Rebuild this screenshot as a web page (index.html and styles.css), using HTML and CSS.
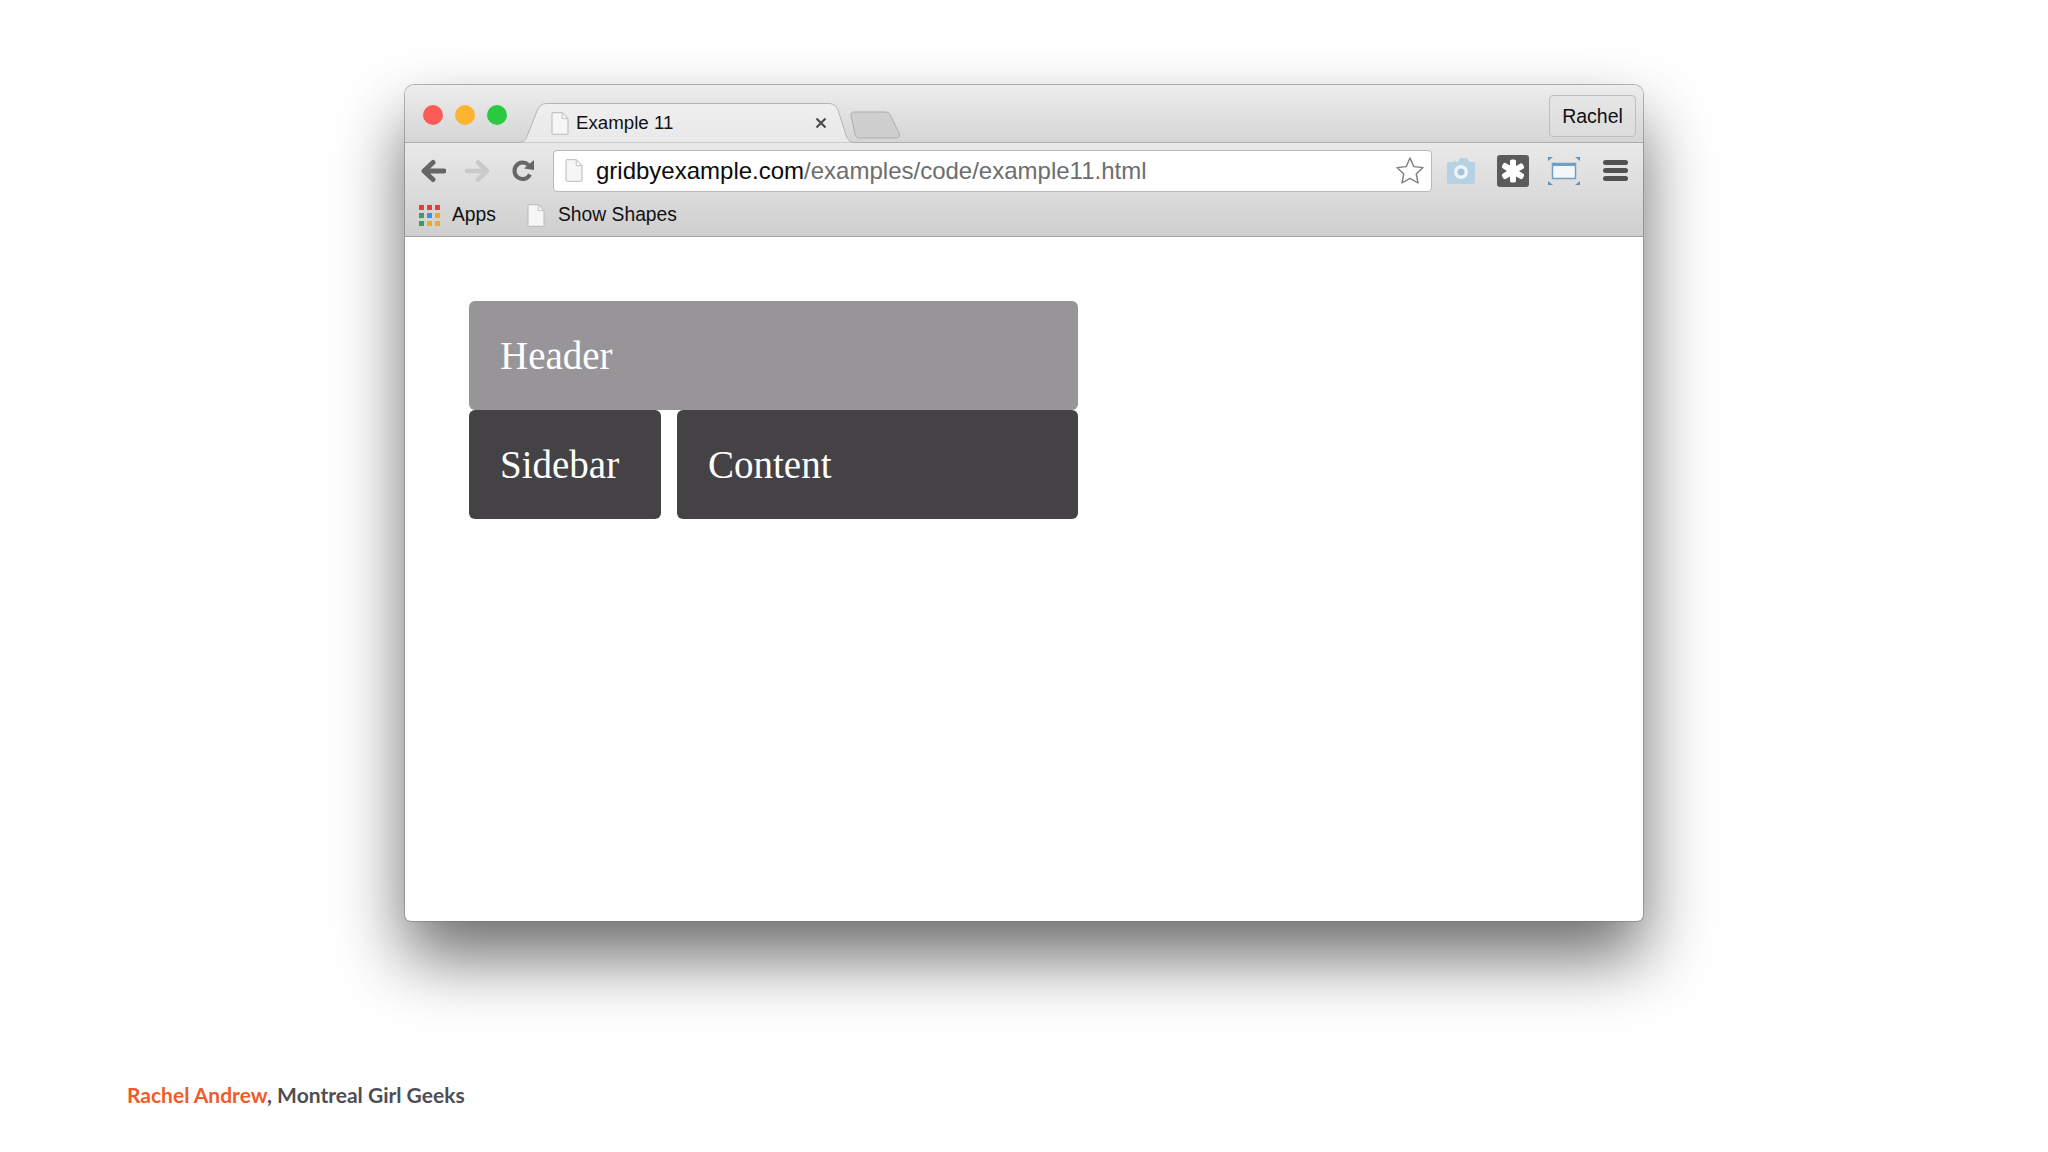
FILE: index.html
```html
<!DOCTYPE html>
<html lang="en">
<head>
<meta charset="utf-8">
<title>Example 11</title>
<link rel="stylesheet" href="styles.css">
</head>
<body>
<svg class="defs" width="0" height="0" aria-hidden="true">
  <symbol id="doc" viewBox="0 0 18 23">
    <path d="M1 1.500C1 1 1.400.7 2 .7h9.500L17 6.500v15c0 .5-.4.8-1 .8H2c-.6 0-1-.3-1-.8z" fill="#f6f6f6" stroke="#b9b9b9" stroke-width="1"/>
    <path d="M11.200 1v5.600H17" fill="none" stroke="#c4c4c4" stroke-width="1"/>
  </symbol>
</svg>
<main class="slide">
  <section class="window">
    <div class="tabstrip">
      <div class="lights">
        <span class="light red"></span>
        <span class="light yellow"></span>
        <span class="light green"></span>
      </div>
      <div class="tab">
        <svg class="tab-shape" viewBox="0 0 338 40" preserveAspectRatio="none">
          <path d="M0 39.500c6 0 8-1 10-6L20 8c2-5 5-7.500 10-7.500h281c5 0 8 2 10 6.500l8 25c2 6 5 7.500 9 7.500" fill="url(#tabfill)" stroke="#b4b4b4"/>
          <defs><linearGradient id="tabfill" x1="0" y1="0" x2="0" y2="1"><stop offset="0" stop-color="#efeff0"/><stop offset="1" stop-color="#e9e9ea"/></linearGradient></defs>
        </svg>
        <svg class="doc tab-doc"><use href="#doc"/></svg>
        <span class="tab-title">Example 11</span>
        <svg class="tab-close" viewBox="0 0 12 12"><path d="M1.500 1.500l9 9M10.500 1.500l-9 9" stroke="#4c4c4c" stroke-width="2.200"/></svg>
      </div>
      <svg class="newtab" viewBox="0 0 52 28"><path d="M2 5c-.6-2.500.8-4 3-4h31c3 0 4.500 1 5.500 3.500L50 22c1 3 0 5-3 5H11c-3 0-4-1-4.800-3.500z" fill="#cfcfd0" stroke="#adadad"/></svg>
      <div class="profile">Rachel</div>
    </div>
    <div class="toolbar">
      <div class="navrow">
        <svg class="nav back" viewBox="0 0 26 24"><path d="M24 12H6M13 3.500L4 12l9 8.500" fill="none" stroke="#666667" stroke-width="5" stroke-linejoin="round" stroke-linecap="round"/></svg>
        <svg class="nav forward" viewBox="0 0 26 24"><path d="M2 12h18M13 3.500l9 8.500-9 8.500" fill="none" stroke="#c9c9ca" stroke-width="4.500" stroke-linejoin="round" stroke-linecap="round"/></svg>
        <svg class="nav reload" viewBox="0 0 24 24"><path d="M19 15.500A8.200 8.200 0 1 1 17.500 6" fill="none" stroke="#666667" stroke-width="4"/><path d="M13 9.500L23 1v10z" fill="#666667"/></svg>
        <div class="omnibox">
          <svg class="doc omni-doc"><use href="#doc"/></svg>
          <span class="url"><span class="host">gridbyexample.com</span>/examples/code/example11.html</span>
          <svg class="star" viewBox="0 0 30 30"><path d="M15 2l3.800 8.600 9.200 1-6.800 6.300 1.900 9.100L15 22.400 6.900 27l1.900-9.100L2 11.600l9.200-1z" fill="#fff" stroke="#7d7d7d" stroke-width="1.400" stroke-linejoin="round"/></svg>
        </div>
        <svg class="tool camera" viewBox="0 0 30 28"><path d="M3 5h5l1-2 1 2h2l2-4h7l2 4h4c1.500 0 2 1 2 2v17c0 2-1 3-2 3H3c-1.500 0-2-1-2-3V7c0-1 .5-2 2-2z" fill="#b6d0e4"/><circle cx="15" cy="15" r="7" fill="#eef3f7"/><circle cx="15" cy="15" r="3.500" fill="#a4c4dc"/></svg>
        <svg class="tool puzzle" viewBox="0 0 32 32"><rect width="32" height="32" rx="3" fill="#5b5b5c"/><path d="M13 6c0-1 1-1.500 3-1.500s3 .5 3 1.500v5l4.500-2.500c1-.5 2 0 3 2s.7 2.700-.2 3.300L22 16l4.300 2.700c.9.600 1.200 1.300.2 3.300s-2 2.500-3 2L19 21.500V26c0 1-1 1.500-3 1.500s-3-.5-3-1.500v-4.500L8.500 24c-1 .5-2 0-3-2s-.7-2.700.2-3.300L10 16l-4.300-2.700c-.9-.6-1.200-1.300-.2-3.300s2-2.500 3-2l4.500 2.500z" fill="#fff"/></svg>
        <svg class="tool screen" viewBox="0 0 32 28"><rect x="4.500" y="6.500" width="23" height="15" fill="#f4f6f8" stroke="#6ea0c4" stroke-width="1.500"/><rect x="4" y="6" width="24" height="3" fill="#6ea0c4"/><path d="M0 0h5L0 4zM32 0h-5l5 4zM0 28h5l-5-4zM32 28h-5l5-4z" fill="#5f94ba"/></svg>
        <div class="menu"><span></span><span></span><span></span></div>
      </div>
      <div class="bookmarks">
        <div class="apps">
          <i class="c-red"></i><i class="c-red"></i><i class="c-red"></i>
          <i class="c-green"></i><i class="c-blue"></i><i class="c-amber"></i>
          <i class="c-green"></i><i class="c-amber"></i><i class="c-amber"></i>
        </div>
        <span class="mark-apps">Apps</span>
        <svg class="doc mark-doc"><use href="#doc"/></svg>
        <span>Show Shapes</span>
      </div>
    </div>
    <div class="viewport">
      <div class="grid">
        <div class="box header">Header</div>
        <div class="box sidebar">Sidebar</div>
        <div class="box content">Content</div>
      </div>
    </div>
  </section>
  <footer class="credit"><span class="name">Rachel Andrew</span>, Montreal Girl Geeks</footer>
</main>
</body>
</html>
```
FILE: styles.css
```css
* { box-sizing: border-box; }
html, body { margin: 0; height: 100%; background: #fff; overflow: hidden; }
.defs { display: block; height: 0; }
.slide { width: 2048px; height: 1152px; padding-top: 85px; }

.window {
  width: 1238px;
  height: 836px;
  margin: 0 0 0 405px;
  border-radius: 9px 9px 6px 6px;
  background: #fefefe;
  box-shadow: 0 0 0 1px rgba(120,120,120,.55), 0 36px 68px rgba(0,0,0,.58);
  font-family: "Liberation Sans", Arial, sans-serif;
  color: #111;
  display: flex;
  flex-direction: column;
}

.tabstrip {
  height: 58px;
  display: flex;
  align-items: flex-start;
  border-radius: 9px 9px 0 0;
  background: linear-gradient(#ededed, #d5d5d5);
  border-bottom: 1px solid #aeaeae;
  position: relative;
}
.lights { display: flex; gap: 12px; padding: 20px 0 0 18px; }
.light { width: 20px; height: 20px; border-radius: 50%; }
.red { background: #fc5b57; }
.yellow { background: #fdb52f; }
.green { background: #2ac940; }

.tab {
  width: 338px;
  height: 40px;
  margin: 18px 0 0 10px;
  position: relative;
  display: flex;
  align-items: center;
  font-size: 18.700px;
}
.tab-shape { position: absolute; inset: 0; width: 100%; height: 100%; }
.doc { width: 18px; height: 23px; flex: none; }
.tab-doc, .tab-title, .tab-close { position: relative; }
.tab-doc { margin-left: 34px; }
.tab-title { margin-left: 7px; flex: 1; }
.tab-close { width: 12px; height: 12px; margin-right: 28px; }
.newtab { width: 52px; height: 28px; margin: 26px 0 0 -6px; position: relative; }

.profile {
  margin: 10px 7px 0 auto;
  width: 87px;
  height: 42px;
  border: 1px solid #bdbdbd;
  border-radius: 4px;
  background: linear-gradient(#e6e6e6, #dcdcdc);
  font-size: 19.500px;
  display: flex;
  align-items: center;
  justify-content: center;
}

.toolbar {
  height: 94px;
  background: linear-gradient(#e9e9ea, #cfcfd0);
  border-bottom: 1px solid #a3a3a3;
}
.navrow { height: 55px; display: flex; align-items: center; }
.nav { flex: none; }
.back { width: 26px; height: 24px; margin-left: 15px; }
.forward { width: 26px; height: 24px; margin-left: 19px; }
.reload { width: 24px; height: 24px; margin-left: 20px; }
.omnibox {
  width: 879px;
  height: 42px;
  margin-left: 18px;
  display: flex;
  align-items: center;
  background: #fff;
  border: 1px solid #b8b8b8;
  border-radius: 4px;
}
.omni-doc { margin-left: 11px; }
.url { margin-left: 13px; flex: 1; font-size: 24px; color: #6d6d6e; white-space: nowrap; }
.host { color: #0c0c0c; }
.star { width: 30px; height: 30px; margin-right: 6px; }
.tool { flex: none; }
.camera { width: 30px; height: 28px; margin-left: 14px; }
.puzzle { width: 32px; height: 32px; margin-left: 21px; }
.screen { width: 32px; height: 28px; margin-left: 19px; }
.menu { width: 25px; margin-left: 23px; display: flex; flex-direction: column; gap: 3px; }
.menu span { height: 5px; border-radius: 3px; background: #515152; }

.bookmarks {
  height: 38px;
  display: flex;
  align-items: center;
  padding: 0 0 4px 14px;
  font-size: 19.300px;
}
.apps { width: 22px; display: grid; grid-template-columns: repeat(3, 5px); gap: 3px; }
.apps i { height: 5px; display: block; }
.c-red { background: #e2403f; }
.c-green { background: #3d9c5c; }
.c-blue { background: #3e8ee8; }
.c-amber { background: #eeaa30; }
.mark-apps { margin-left: 11px; }
.mark-doc { margin: 0 13px 0 31px; }

.viewport { flex: 1; padding: 64px 0 0 64px; }
.grid {
  width: 609px;
  display: grid;
  grid-template-columns: 192px 401px;
  grid-template-rows: 109px 109px;
  column-gap: 16px;
}
.box {
  border-radius: 6px;
  color: #fff;
  font-family: "Liberation Serif", "Times New Roman", serif;
  font-size: 39px;
  display: flex;
  align-items: center;
  padding-left: 31px;
}
.header { grid-column: 1 / 3; background: #979598; }
.sidebar, .content { background: #444245; }

.credit {
  margin: 161px 0 0 127px;
  font-family: "Lato", sans-serif;
  font-size: 21px;
  line-height: 26px;
  font-weight: 700;
  color: #4f4e52;
}
.name { color: #f15a2b; }
```
